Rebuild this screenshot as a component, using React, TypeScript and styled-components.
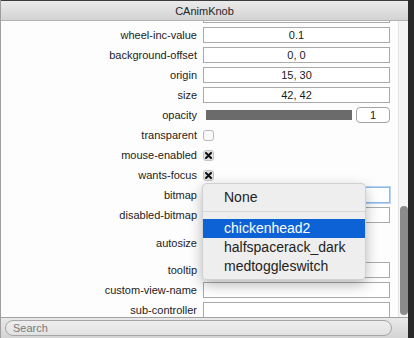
import React, { useLayoutEffect, useRef } from "react";
import styled, { createGlobalStyle } from "styled-components";

const GlobalStyle = createGlobalStyle`
  html, body { margin: 0; padding: 0; }
  body {
    background: #2a2a2a;
    font-family: "Liberation Sans", Arial, sans-serif;
    overflow: hidden;
  }
`;

const Window = styled.div`
  position: relative;
  width: 407px;
  height: 338px;
  display: flex;
  flex-direction: column;
  background: #fdfdfd;
  border-left: 1px solid #9e9e9e;
`;

const TitleBar = styled.div`
  height: 19px;
  border-top: 1px solid #3c3c3c;
  border-bottom: 1px solid #b1b1b1;
  background: linear-gradient(#ebebeb, #d3d3d3);
  display: flex;
  align-items: center;
  justify-content: center;
  font-size: 11px;
  color: #262626;
`;

const Body = styled.div`
  flex: 1;
  display: flex;
  min-height: 0;
`;

const ScrollArea = styled.div`
  flex: 1;
  overflow: hidden;
`;

const List = styled.div`
  display: flex;
  flex-direction: column;
  padding-right: 7px;
`;

const Row = styled.div<{ $h?: number }>`
  display: grid;
  grid-template-columns: 196px 187px;
  column-gap: 6px;
  align-items: center;
  height: ${(p) => p.$h ?? 20}px;
`;

const Label = styled.div`
  text-align: right;
  font-size: 11px;
  color: #1c1c1c;
  white-space: nowrap;
`;

const Field = styled.div<{ $focus?: boolean }>`
  box-sizing: border-box;
  height: 16px;
  background: #fff;
  border: 1px solid ${(p) => (p.$focus ? "#8fb7ea" : "#aaaaaa")};
  box-shadow: ${(p) => (p.$focus ? "0 0 0 1px #b9d3f3" : "none")};
  display: flex;
  align-items: center;
  justify-content: center;
  font-size: 11px;
  color: #1a1a1a;
`;

const SliderRow = styled.div`
  display: flex;
  align-items: center;
  gap: 4px;
  padding-left: 3px;
`;

const SliderBar = styled.div`
  width: 146px;
  height: 10px;
  background: #6b6b6b;
`;

const NumberField = styled.div`
  box-sizing: border-box;
  width: 34px;
  height: 16px;
  border: 1px solid #a4a4a4;
  border-radius: 4px;
  background: #fff;
  display: flex;
  align-items: center;
  justify-content: center;
  font-size: 11px;
  color: #2a1a14;
`;

const Check = styled.div<{ $on?: boolean }>`
  box-sizing: border-box;
  width: 11px;
  height: 11px;
  border-radius: 3px;
  border: 1px solid ${(p) => (p.$on ? "#c4c4c4" : "#b9b9b9")};
  background: ${(p) => (p.$on ? "#e2e2e2" : "#fafafa")};
  display: flex;
  align-items: center;
  justify-content: center;
`;

const Track = styled.div`
  width: 10px;
  border-left: 1px solid #e6e6e6;
  background: #f5f5f5;
  display: flex;
  flex-direction: column;
  justify-content: flex-end;
  padding: 0 1px 2px 1px;
  box-sizing: border-box;
`;

const Thumb = styled.div`
  width: 8px;
  height: 109px;
  border-radius: 4px;
  background: #8b8b8b;
`;

const BottomBar = styled.div`
  height: 18px;
  border-top: 1px solid #a2a2a2;
  background: linear-gradient(#e9e9e9, #d4d4d4);
  padding: 2px 0 0 4px;
  box-sizing: content-box;
  display: flex;
  align-items: flex-start;
`;

const Search = styled.div`
  box-sizing: border-box;
  width: 387px;
  height: 16px;
  border: 1px solid #a6a6a6;
  border-radius: 8px;
  background: linear-gradient(#eeeeee, #e2e2e2);
  font-size: 11px;
  color: #7a7a7a;
  padding-left: 7px;
  display: flex;
  align-items: center;
`;

const Menu = styled.div`
  position: absolute;
  top: 183px;
  left: 201px;
  width: 164px;
  padding: 4px 0 3px;
  border-radius: 5px;
  background: #eeeeee;
  border: 0.5px solid rgba(0, 0, 0, 0.12);
  box-shadow: 0 5px 14px rgba(0, 0, 0, 0.28);
  box-sizing: border-box;
  overflow: hidden;
`;

const MenuItem = styled.div<{ $active?: boolean }>`
  height: 19px;
  line-height: 19px;
  padding-left: 21px;
  font-size: 14px;
  color: ${(p) => (p.$active ? "#ffffff" : "#222222")};
  background: ${(p) => (p.$active ? "#0d63d6" : "transparent")};
  white-space: nowrap;
`;

const Separator = styled.div`
  height: 1px;
  background: #d9d9d9;
  margin: 4px 0 7px;
`;

const XMark = () => (
  <svg width="7" height="7" viewBox="0 0 7 7">
    <path d="M1 1L6 6M6 1L1 6" stroke="#111" strokeWidth="2" strokeLinecap="round" />
  </svg>
);

type Prop =
  | { kind: "text"; label: string; value?: string; focus?: boolean }
  | { kind: "check"; label: string; on: boolean }
  | { kind: "slider"; label: string; value: string }
  | { kind: "group"; label: string; h: number };

// first row is scrolled out of view; only the bottom edge of its field shows
const props: Prop[] = [
  { kind: "text", label: "" },
  { kind: "text", label: "wheel-inc-value", value: "0.1" },
  { kind: "text", label: "background-offset", value: "0, 0" },
  { kind: "text", label: "origin", value: "15, 30" },
  { kind: "text", label: "size", value: "42, 42" },
  { kind: "slider", label: "opacity", value: "1" },
  { kind: "check", label: "transparent", on: false },
  { kind: "check", label: "mouse-enabled", on: true },
  { kind: "check", label: "wants-focus", on: true },
  { kind: "text", label: "bitmap", focus: true },
  { kind: "text", label: "disabled-bitmap" },
  { kind: "group", label: "autosize", h: 35 },
  { kind: "text", label: "tooltip" },
  { kind: "text", label: "custom-view-name" },
  { kind: "text", label: "sub-controller" },
];

function renderValue(p: Prop) {
  switch (p.kind) {
    case "text":
      return <Field $focus={p.focus}>{p.value}</Field>;
    case "check":
      return <Check $on={p.on}>{p.on && <XMark />}</Check>;
    case "slider":
      return (
        <SliderRow>
          <SliderBar />
          <NumberField>{p.value}</NumberField>
        </SliderRow>
      );
    case "group":
      return <div />;
  }
}

export default function App() {
  const ref = useRef<HTMLDivElement>(null);
  useLayoutEffect(() => {
    if (ref.current) ref.current.scrollTop = 16;
  }, []);
  return (
    <>
      <GlobalStyle />
      <Window>
        <TitleBar>CAnimKnob</TitleBar>
        <Body>
          <ScrollArea ref={ref}>
            <List>
              {props.map((p, i) => (
                <Row key={i} $h={p.kind === "group" ? p.h : 20}>
                  <Label>{p.label}</Label>
                  {renderValue(p)}
                </Row>
              ))}
            </List>
          </ScrollArea>
          <Track>
            <Thumb />
          </Track>
        </Body>
        <BottomBar>
          <Search>Search</Search>
        </BottomBar>
        <Menu>
          <MenuItem>None</MenuItem>
          <Separator />
          <MenuItem $active>chickenhead2</MenuItem>
          <MenuItem>halfspacerack_dark</MenuItem>
          <MenuItem>medtoggleswitch</MenuItem>
        </Menu>
      </Window>
    </>
  );
}
